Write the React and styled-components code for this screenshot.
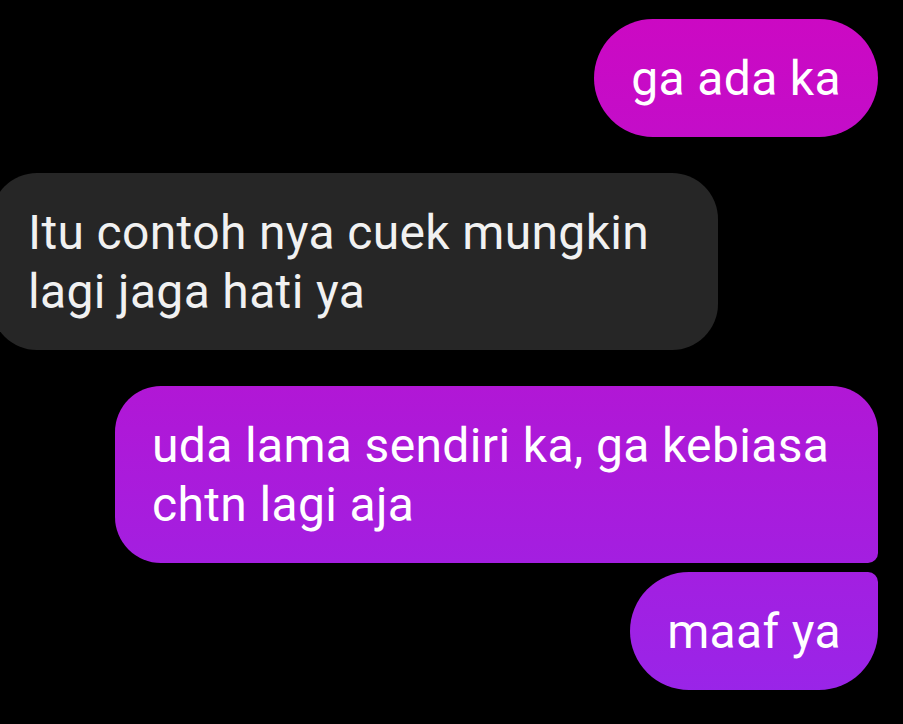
import React from "react";
import styled, { createGlobalStyle, css } from "styled-components";

const GlobalStyle = createGlobalStyle`
  html, body {
    margin: 0;
    padding: 0;
    background: #000;
  }
  body {
    font-family: Roboto, "Noto Sans", "Liberation Sans", sans-serif;
    overflow: hidden;
  }
`;

const Thread = styled.div`
  width: 903px;
  height: 724px;
  padding: 19px 25px 0 0;
  box-sizing: border-box;
  display: flex;
  flex-direction: column;
  gap: 36px;
  background: #000;
`;

const Group = styled.div`
  display: flex;
  flex-direction: column;
  align-items: ${(p) => (p.$mine ? "flex-end" : "flex-start")};
  gap: 9px;
`;

const Bubble = styled.div`
  max-width: ${(p) => p.$max || 763}px;
  box-sizing: border-box;
  padding: 30px 37px 29px;
  font-size: 48px;
  line-height: 59px;
  letter-spacing: 0.35px;
  border-radius: 46px;
  ${(p) =>
    p.$mine
      ? css`
          color: #fff;
          /* one gradient across the whole screen, each bubble shows its slice */
          background: linear-gradient(180deg, #cd08c2 0%, #b316d4 50%, #9726ea 100%);
          background-attachment: fixed;
        `
      : css`
          color: #f1f1f1;
          background: #262626;
          margin-left: -9px;
        `}
  ${(p) => p.$pill && css`border-radius: 59px;`}
  ${(p) => p.$tailBottom && css`border-bottom-right-radius: 10px;`}
  ${(p) => p.$tailTop && css`border-top-right-radius: 10px;`}
`;

const messages = [
  { mine: true, items: [{ text: "ga ada ka", pill: true }] },
  { mine: false, items: [{ text: "Itu contoh nya cuek mungkin lagi jaga hati ya", max: 727 }] },
  {
    mine: true,
    items: [
      { text: "uda lama sendiri ka, ga kebiasa chtn lagi aja", tailBottom: true },
      { text: "maaf ya", pill: true, tailTop: true },
    ],
  },
];

export default function App() {
  return (
    <>
      <GlobalStyle />
      <Thread>
        {messages.map((g, i) => (
          <Group key={i} $mine={g.mine}>
            {g.items.map((m, j) => (
              <Bubble
                key={j}
                $mine={g.mine}
                $max={m.max}
                $pill={m.pill}
                $tailBottom={m.tailBottom}
                $tailTop={m.tailTop}
              >
                {m.text}
              </Bubble>
            ))}
          </Group>
        ))}
      </Thread>
    </>
  );
}
